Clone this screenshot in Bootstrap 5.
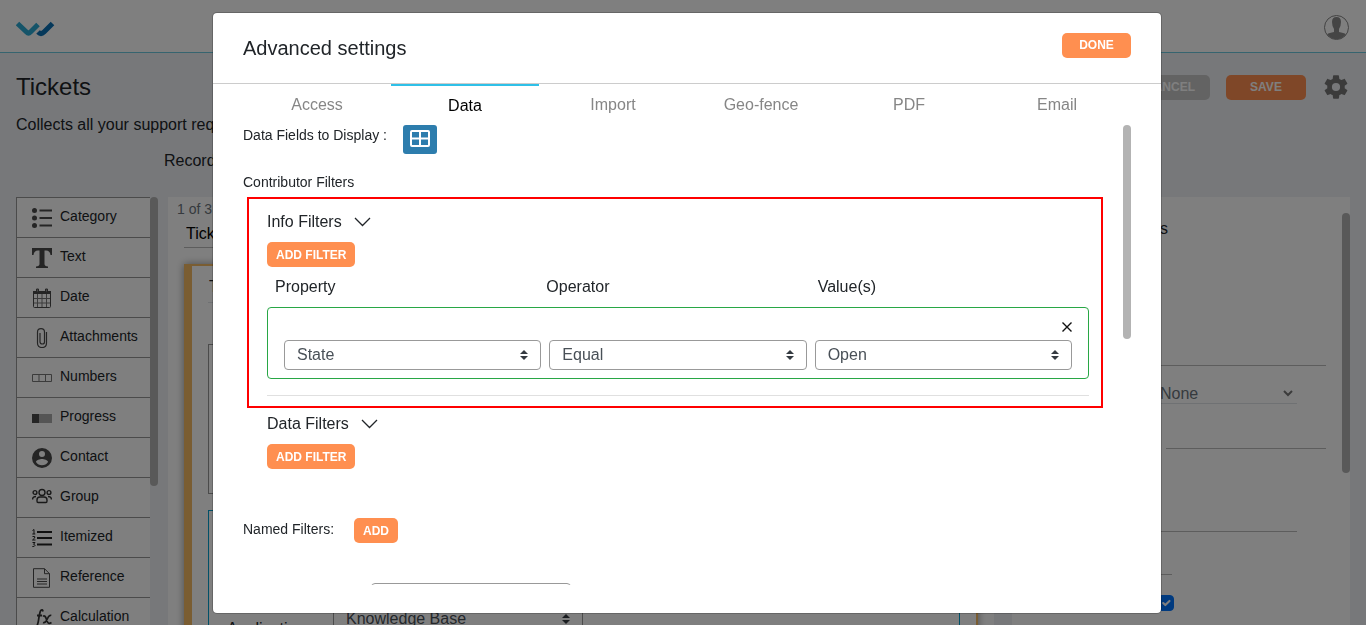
<!DOCTYPE html>
<html lang="en">
<head>
<meta charset="utf-8">
<meta name="viewport" content="width=device-width, initial-scale=1">
<title>Tickets - Advanced settings</title>
<link href="https://cdn.jsdelivr.net/npm/bootstrap@5.3.0/dist/css/bootstrap.min.css" rel="stylesheet">
<style>
body { font-family: "Liberation Sans", Arial, sans-serif; font-size: 16px; line-height: 24px; color: #212529; background: #eef1f5; }
.app { height: 100vh; overflow: hidden; }
.topbar { height: 53px; padding: 2px 16px 0; border-bottom: 1px solid #6cc9de; }
.page-title { font-size: 24px; line-height: 28px; }
.text-14 { font-size: 14px; line-height: 21px; }
.btn-brand { --bs-btn-bg: #ff8f50; --bs-btn-color: #fff; --bs-btn-hover-bg: #f57f3c; --bs-btn-hover-color: #fff; border: 0; border-radius: 5px; height: 25px; padding: 1px 9px 0; font-size: 12px; font-weight: 700; line-height: 25px; }
.btn-wide { width: 80px; line-height: 24px; padding: 0 0 1px; }
.btn-done { width: 69px; line-height: 24px; padding: 0 0 1px; }
.btn-muted { --bs-btn-bg: #c6c6c6; }
.toolbox { width: 142px; }
.tool { height: 40px; border: solid #969696; border-width: 1px 0 0 1px; padding: 0 0 2px 15px; gap: 8px; font-size: 14px; line-height: 21px; color: #212529; text-decoration: none; border-radius: 0; }
.tool svg { width: 20px; height: 20px; flex: none; color: #4a4a4a; margin-top: 2px; }
.thumb { width: 8px; border-radius: 4px; background: #b3b3b3; flex: none; }
.plain-field { border: 0; border-bottom: 1px solid #bbb; border-radius: 0; background: transparent; padding: 0; }
.form-name { height: 28px; padding-left: 2px; }
.form-card { border: solid #f5ba64; border-width: 2px 2px 0 8px; box-shadow: 0 0 8px rgba(0,0,0,.4); }
.block-title { height: 37px; padding: 9px 0 0 1px; }
.block-box { height: 150px; border: 1px solid #969696; }
.block-active { border: 1px solid #00a0d0; }
.updown { appearance: none; color: #495057; background: #fff url("data:image/svg+xml,%3csvg xmlns='http://www.w3.org/2000/svg' viewBox='0 0 4 5'%3e%3cpath fill='%23343a40' d='M2 0L0 2h4zm0 5L0 3h4z'/%3e%3c/svg%3e") no-repeat right 12px center / 8px 10px; border: 1px solid #999; border-radius: 4px; height: 30px; padding: 0 28px 0 12px; font-size: 16px; line-height: 24px; }
.side-panel { width: 338px; }
.settings-modal { padding-left: 8px; }
.settings-modal .modal-dialog { max-width: 950px; margin: 12px auto 11px; height: calc(100vh - 23px); }
.settings-modal .modal-content { height: 100%; border-radius: 5px; border-color: rgba(0,0,0,.2); }
.settings-head { height: 71px; padding: 20px 30px 0; border-bottom: 1px solid #ccc; }
.settings-head h2 { font-size: 20px; line-height: 30px; }
.settings-tabs .nav-link { height: 41px; border: 0; border-top: 2px solid transparent; border-radius: 0; padding: 7px 0 0; color: #868686; line-height: 24px; }
.settings-tabs .nav-link.active { color: #000; border-color: #2fc0e8; padding-top: 8px; }
.settings-scroll { margin: 0 30px 28px; min-height: 0; overflow: hidden; }
.field-label { width: 160px; }
.btn-grid { --bs-btn-bg: #2d7dad; --bs-btn-hover-bg: #246a94; --bs-btn-color: #fff; --bs-btn-hover-color: #fff; width: 34px; height: 29px; padding: 0 0 2px; border: 0; border-radius: 3px; line-height: 0; }
.filter-frame { margin: 4px 20px 0 4px; border: 2px solid #f00; padding: 11px 12px 10px 18px; }
.filter-group { margin-left: 24px; margin-top: 4px; }
.mt-8 { margin-top: 8px; }
.filter-rule { border: 1px solid #28a745; border-radius: 4px; margin-top: 8px; padding: 0 16px 8px; }
.close-line { height: 32px; padding: 11px 0 0; }
.thin-line { height: 1px; background: #e0e0e0; margin-top: 16px; }
.square-check { border-radius: 2px; }
.square-check:checked { background-color: #0075ff; border-color: #0075ff; }
</style>
</head>
<body>
<div class="app d-flex flex-column">
  <header class="topbar bg-white d-flex align-items-center justify-content-between flex-shrink-0">
    <a href="#" aria-label="Home" class="d-flex pt-1">
      <svg width="40" height="18" viewBox="0 0 40 18"><path d="M22 12q3 3 6 0L36.500 3.500" fill="none" stroke="#0b70b4" stroke-width="5" stroke-linejoin="round"/><path d="M1.500 3.500L10.500 12q2 2 4 0l7.500-7.500" fill="none" stroke="#2aa9d2" stroke-width="5"/></svg>
    </a>
    <a href="#" aria-label="Profile" class="d-flex">
      <svg width="27" height="27" viewBox="0 0 27 27"><defs><clipPath id="face"><circle cx="13.500" cy="13.500" r="11.500"/></clipPath></defs><circle cx="13.500" cy="13.500" r="12" fill="#fff" stroke="#858585"/><path clip-path="url(#face)" d="M9 8q0-5 4.500-5T18 8q0 4-2 7v3q7 1 9 4v5H2v-5q2-3 9-4v-3Q9 12 9 8z" fill="#8a8a8a"/></svg>
    </a>
  </header>

  <section class="px-3 flex-shrink-0">
    <div class="d-flex justify-content-between pt-3 mt-1">
      <h1 class="page-title fw-normal mb-0">Tickets</h1>
      <div class="d-flex align-items-center gap-3">
        <button type="button" class="btn btn-brand btn-wide btn-muted">CANCEL</button>
        <button type="button" class="btn btn-brand btn-wide">SAVE</button>
        <a href="#" aria-label="Form settings" class="d-flex">
          <svg width="28" height="28" viewBox="0 0 24 24" fill="#777"><path d="M19.430 12.980c.04-.32.07-.64.07-.98s-.03-.66-.07-.98l2.110-1.650c.19-.15.24-.42.12-.64l-2-3.460c-.12-.22-.39-.3-.61-.22l-2.490 1c-.52-.4-1.080-.73-1.690-.98l-.38-2.650C14.460 2.180 14.250 2 14 2h-4c-.25 0-.46.18-.49.42l-.38 2.650c-.61.25-1.170.59-1.690.98l-2.490-1c-.23-.09-.49 0-.61.22l-2 3.460c-.13.22-.07.49.12.64l2.110 1.650c-.04.32-.07.65-.07.98s.03.66.07.98l-2.110 1.650c-.19.15-.24.42-.12.64l2 3.460c.12.22.39.3.61.22l2.490-1c.52.4 1.080.73 1.690.98l.38 2.650c.03.24.24.42.49.42h4c.25 0 .46-.18.49-.42l.38-2.650c.61-.25 1.170-.59 1.690-.98l2.490 1c.23.09.49 0 .61-.22l2-3.460c.12-.22.07-.49-.12-.64zM12 15.500a3.500 3.500 0 1 1 0-7 3.500 3.500 0 0 1 0 7z"/></svg>
        </a>
      </div>
    </div>
    <p class="mb-0 pt-2 mt-1">Collects all your support requests</p>
    <p class="mb-4 pt-2 mt-1 ms-5 ps-5"><span class="ms-5 ps-1">Records</span></p>
  </section>

  <main class="d-flex flex-grow-1 px-3 overflow-hidden">
    <aside class="toolbox d-flex flex-shrink-0">
      <nav class="flex-grow-1 bg-white align-self-start">
        <a class="tool d-flex align-items-center" href="#"><svg viewBox="0 0 20 20" fill="currentColor"><circle cx="2.500" cy="2.500" r="2.500"/><circle cx="2.500" cy="10" r="2.500"/><circle cx="2.500" cy="17.500" r="2.500"/><path d="M7.500 1.500H20v2H7.500zM7.500 9H20v2H7.500zM7.500 16.500H20v2H7.500z"/></svg>Category</a>
        <a class="tool d-flex align-items-center" href="#"><svg viewBox="0 0 20 20" fill="currentColor"><path d="M0 0h20v7h-1.500Q18 2.500 14 2.500h-1.500V16q0 2 3.500 2.500V20H4v-1.500Q7.500 18 7.500 16V2.500H6Q2 2.500 1.500 7H0z"/></svg>Text</a>
        <a class="tool d-flex align-items-center" href="#"><svg viewBox="0 0 20 20" fill="none" stroke="currentColor"><rect x="1.500" y="3.500" width="17" height="16" rx="1"/><path d="M1 3h18v3H1z" fill="currentColor" stroke="none"/><path d="M4.500 1h2v3h-2zM13.500 1h2v3h-2z" fill="#999"/><path d="M5.500 6v13M10 6v13M14.500 6v13M2 10.500h16M2 15h16" stroke="#777"/></svg>Date</a>
        <a class="tool d-flex align-items-center" href="#"><svg viewBox="0 0 20 20" fill="none" stroke="currentColor" stroke-width="1.200"><path d="M14.500 4v11q0 4.500-4.500 4.500T5.500 15V4Q5.500.7 9 .7T12.500 4v10q0 2-2.200 2T8 14V5"/></svg>Attachments</a>
        <a class="tool d-flex align-items-center" href="#"><svg viewBox="0 0 20 20" fill="none" stroke="#777"><path d="M.5 6.500h19v7H.5zM7 6.500v7M13.500 6.500v7"/></svg>Numbers</a>
        <a class="tool d-flex align-items-center" href="#"><svg viewBox="0 0 20 20"><path d="M0 6h20v9H0z" fill="#aaa"/><path d="M0 6h7v9H0z" fill="currentColor"/></svg>Progress</a>
        <a class="tool d-flex align-items-center" href="#"><svg viewBox="2 2 20 20" fill="currentColor"><path d="M12 2a10 10 0 1 0 0 20 10 10 0 0 0 0-20zm0 3a3 3 0 1 1 0 6 3 3 0 0 1 0-6zm0 14.200a7.200 7.200 0 0 1-6-3.220c.03-1.990 4-3.080 6-3.080s5.970 1.090 6 3.080a7.200 7.200 0 0 1-6 3.220z"/></svg>Contact</a>
        <a class="tool d-flex align-items-center" href="#"><svg viewBox="0 0 20 20" fill="none" stroke="#333" stroke-width="1.400"><circle cx="10" cy="4.500" r="3"/><circle cx="3" cy="4.500" r="1.900"/><circle cx="17" cy="4.500" r="1.900"/><path d="M5 13v-1q0-3 3-3h4q3 0 3 3v1q0 1.500-1 1.500H6Q5 14.500 5 13zM.6 11.500Q.6 8.500 4 8.500M19.400 11.500q0-3-3.400-3"/></svg>Group</a>
        <a class="tool d-flex align-items-center" href="#"><svg viewBox="0 0 20 20" fill="none" stroke="#222"><path d="M5 4h15M5 10h15M5 16.500h15" stroke-width="2"/><path d="M.5 2.500l1.500-1V6M.3 6h3M.5 8.500h2.200V10L.5 12h3M.5 14.500H3L1.500 16.300Q3 16.500 3 17.500T.3 18.600"/></svg>Itemized</a>
        <a class="tool d-flex align-items-center" href="#"><svg viewBox="0 0 20 20" fill="none" stroke="currentColor"><path d="M1.500.7h11l5 5v13.600h-16zM12.500.7v5h5M5 11h10M5 13.500h10M5 16h10"/></svg>Reference</a>
        <a class="tool d-flex align-items-center" href="#"><svg viewBox="0 0 20 20" fill="none" stroke="#333"><path d="M11 3.500Q10.500.8 8.800 2.500 8 3.500 7 9q-1 8-2.500 9.500T2 17.500M5 7.500h5" stroke-width="1.800"/><path d="M11 8.500q2-2 3.500 3l1 2.500q1 2.500 4 .5M19.300 7.500q-2-1-4 3.500T11 14.500" stroke-width="1.700"/></svg>Calculation</a>
      </nav>
      <div class="thumb" style="height:289px"></div>
    </aside>

    <section class="flex-grow-1 bg-white px-3 d-flex flex-column" style="margin:0 18px 0 10px">
      <div class="text-14 text-secondary" style="margin:2px 0 0 -7px">1 of 3</div>
      <input class="plain-field form-name w-100 flex-shrink-0" aria-label="Form name" value="Tickets">
      <div class="form-card flex-grow-1 mt-3 px-3">
        <div class="block-title border-bottom">Title</div>
        <div class="block-box" style="margin-top:41px"></div>
        <div class="block-active h-100 mt-3">
          <div class="d-flex align-items-start" style="padding:91px 0 0 18px">
            <label for="application" style="width:106px;padding-top:15px">Application</label>
            <select id="application" class="updown" style="width:250px;height:34px"><option>Knowledge Base</option></select>
          </div>
        </div>
      </div>
    </section>

    <section class="side-panel flex-shrink-0 bg-white d-flex">
      <div class="flex-grow-1 ps-4" style="padding-right:16px">
        <div style="width:132px;margin-top:20px" class="text-end">Settings</div>
        <input class="plain-field w-100" aria-label="Label" style="height:125px">
        <div class="d-flex align-items-center justify-content-between text-secondary border-bottom" style="height:38px;padding:18px 4px 0 0;margin-right:29px">
          <span style="padding-left:124px">None</span>
          <svg width="10" height="7" viewBox="0 0 10 7" fill="none" stroke="#777" stroke-width="2"><path d="M1 1l4 4 4-4"/></svg>
        </div>
        <input class="plain-field d-block ms-auto" aria-label="Hint" style="width:160px;height:45px">
        <input class="plain-field d-block" aria-label="Default value" style="width:261px;height:83px">
        <input class="plain-field d-block" aria-label="Size" style="width:136px;height:43px">
        <div class="form-check mb-0 p-0" style="margin:20px 0 0 122px"><input class="form-check-input square-check m-0 float-none d-block" type="checkbox" checked aria-label="Required"></div>
      </div>
      <div class="thumb mt-3" style="height:260px"></div>
    </section>
  </main>
</div>

<div class="modal-backdrop show"></div>
<div class="modal d-block settings-modal overflow-hidden" tabindex="-1" role="dialog" aria-labelledby="settings-title">
  <div class="modal-dialog">
    <div class="modal-content">
      <div class="settings-head d-flex justify-content-between align-items-start flex-shrink-0">
        <h2 id="settings-title" class="fw-normal mb-0">Advanced settings</h2>
        <button type="button" class="btn btn-brand btn-done">DONE</button>
      </div>
      <nav class="nav nav-justified settings-tabs flex-shrink-0" style="margin:0 30px">
        <a class="nav-link" href="#">Access</a>
        <a class="nav-link active" href="#">Data</a>
        <a class="nav-link" href="#">Import</a>
        <a class="nav-link" href="#">Geo-fence</a>
        <a class="nav-link" href="#">PDF</a>
        <a class="nav-link" href="#">Email</a>
      </nav>
      <div class="settings-scroll d-flex flex-grow-1">
        <div class="flex-grow-1">
          <div class="d-flex align-items-start">
            <span class="field-label text-14">Data Fields to Display :</span>
            <button type="button" class="btn btn-grid" aria-label="Choose fields"><svg width="20" height="17" viewBox="0 0 20 17" fill="none" stroke="#fff" stroke-width="2"><rect x="1" y="1" width="18" height="15" rx="1"/><path d="M10 1v15M1 8.500h18"/></svg></button>
          </div>
          <div class="text-14" style="margin-top:18px">Contributor Filters</div>
          <div class="filter-frame">
            <div class="d-flex align-items-center gap-2">Info Filters
              <svg class="ms-1" width="17" height="10" viewBox="0 0 17 10" fill="none" stroke="#212529" stroke-width="1.300"><path d="M1 1l7.500 7.500L16 1"/></svg></div>
            <button type="button" class="btn btn-brand mt-8 d-block">ADD FILTER</button>
            <div class="row g-0 ps-2 mt-8">
              <label class="col" for="property">Property</label>
              <label class="col" for="operator">Operator</label>
              <label class="col" for="values">Value(s)</label>
            </div>
            <div class="filter-rule">
              <div class="close-line d-flex justify-content-end align-items-start">
                <button type="button" class="btn p-0 border-0 lh-1 d-flex" aria-label="Remove filter"><svg width="10" height="16" viewBox="0 0 10 16" fill="none" stroke="#111" stroke-width="1.400"><path d="M.5 3.500l9 9M9.500 3.500l-9 9"/></svg></button>
              </div>
              <div class="d-flex gap-2">
                <select id="property" class="updown w-100"><option>State</option></select>
                <select id="operator" class="updown w-100"><option>Equal</option></select>
                <select id="values" class="updown w-100"><option>Open</option></select>
              </div>
            </div>
            <div class="thin-line"></div>
          </div>
          <div class="filter-group">
            <div class="d-flex align-items-center gap-2">Data Filters
              <svg class="ms-1" width="17" height="10" viewBox="0 0 17 10" fill="none" stroke="#212529" stroke-width="1.300"><path d="M1 1l7.500 7.500L16 1"/></svg></div>
            <button type="button" class="btn btn-brand mt-8 d-block">ADD FILTER</button>
          </div>
          <div class="d-flex align-items-start" style="margin-top:49px">
            <span class="text-14" style="width:111px;padding-top:1px">Named Filters:</span>
            <button type="button" class="btn btn-brand">ADD</button>
          </div>
          <select class="updown d-block" aria-label="Default filter" style="width:200px;margin:40px 0 0 128px"><option></option></select>
        </div>
        <div class="thumb" style="height:214px"></div>
      </div>
    </div>
  </div>
</div>
<script src="https://cdn.jsdelivr.net/npm/bootstrap@5.3.0/dist/js/bootstrap.bundle.min.js"></script>
</body>
</html>
